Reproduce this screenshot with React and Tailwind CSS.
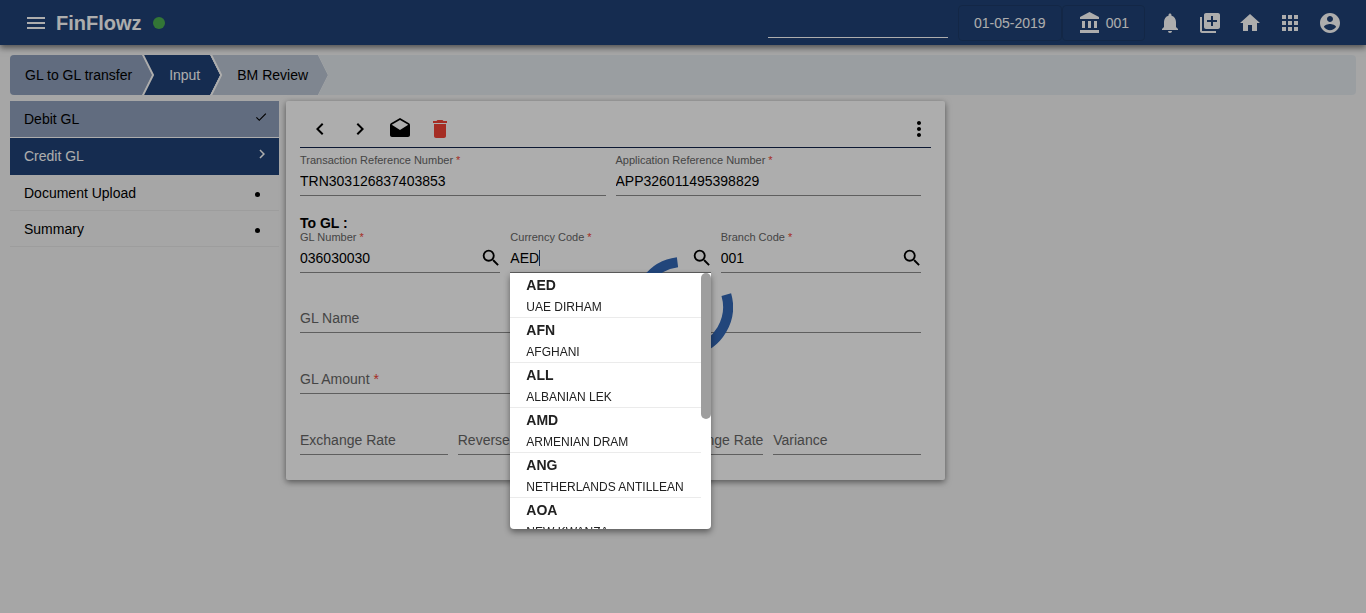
import React, { useState } from "react";
import {
  MdMenu,
  MdNotifications,
  MdHome,
  MdApps,
  MdChevronLeft,
  MdChevronRight,
  MdDrafts,
  MdDelete,
  MdMoreVert,
  MdSearch,
  MdCheck,
} from "react-icons/md";

const currencies = [
  ["AED", "UAE DIRHAM"],
  ["AFN", "AFGHANI"],
  ["ALL", "ALBANIAN LEK"],
  ["AMD", "ARMENIAN DRAM"],
  ["ANG", "NETHERLANDS ANTILLEAN"],
  ["AOA", "NEW KWANZA"],
];

function Glyph({ d }) {
  return (
    <svg viewBox="0 0 24 24" className="size-6" fill="currentColor" aria-hidden="true">
      <path d={d} />
    </svg>
  );
}

function BankIcon() {
  return (
    <Glyph d="M4 10v7h3v-7H4zm6 0v7h3v-7h-3zM2 22h19v-3H2v3zm14-12v7h3v-7h-3zm-4.500-9L2 6v2h19V6l-9.500-5z" />
  );
}

function LibraryAddIcon() {
  return (
    <Glyph d="M4 6H2v14c0 1.100.9 2 2 2h14v-2H4V6zm16-4H8c-1.100 0-2 .9-2 2v12c0 1.100.9 2 2 2h12c1.100 0 2-.9 2-2V4c0-1.100-.9-2-2-2zm-1 9h-4v4h-2v-4H9V9h4V5h2v4h4v2z" />
  );
}

function AccountIcon() {
  return (
    <Glyph d="M12 2C6.480 2 2 6.480 2 12s4.480 10 10 10 10-4.480 10-10S17.520 2 12 2zm0 3c1.660 0 3 1.340 3 3s-1.340 3-3 3-3-1.340-3-3 1.340-3 3-3zm0 14.200c-2.500 0-4.710-1.280-6-3.220.03-1.990 4-3.080 6-3.080 1.990 0 5.970 1.090 6 3.080-1.290 1.940-3.500 3.220-6 3.220z" />
  );
}

const headerActions = [
  ["Notifications", MdNotifications],
  ["Add to library", LibraryAddIcon],
  ["Home", MdHome],
  ["Apps", MdApps],
  ["Account", AccountIcon],
];

function Header() {
  return (
    <header className="flex h-[45px] items-center bg-[#204276] pl-6 pr-6 text-white shadow-[0_3px_6px_rgba(0,0,0,0.5)]">
      <button type="button" aria-label="Menu">
        <MdMenu className="size-6" />
      </button>
      <h1 className="ml-2 text-xl font-bold">FinFlowz</h1>
      <span className="ml-[11px] size-3 rounded-full bg-[#4caf50]" />
      <input
        aria-label="Search"
        className="ml-auto h-[30px] w-[180px] border-b border-white bg-transparent text-sm outline-none"
      />
      <div className="ml-[10px] flex text-sm">
        <span className="flex h-9 items-center rounded border border-[#1c3a68] px-[15px]">01-05-2019</span>
        <span className="flex h-9 items-center gap-1 rounded border border-[#1c3a68] px-[15px]">
          <BankIcon />
          001
        </span>
      </div>
      <nav className="ml-[13px] flex gap-4">
        {headerActions.map(([name, Icon]) => (
          <button key={name} type="button" aria-label={name}>
            <Icon className="size-6" />
          </button>
        ))}
      </nav>
    </header>
  );
}

function Steps() {
  return (
    <ol className="flex h-10 rounded bg-[#e4e9ee] text-sm">
      <li className="flex">
        <button
          type="button"
          className="rounded-l bg-[#90a0bc] pl-[15px] pr-5 [clip-path:polygon(0_0,calc(100%-10px)_0,100%_50%,calc(100%-10px)_100%,0_100%)]"
        >
          GL to GL transfer
        </button>
      </li>
      <li className="-ml-[10px] flex bg-white pl-[2px] [clip-path:polygon(0_0,calc(100%-10px)_0,100%_50%,calc(100%-10px)_100%,0_100%,10px_50%)]">
        <button
          type="button"
          className="bg-[#204276] pl-[25px] pr-5 text-white [clip-path:polygon(0_0,calc(100%-10px)_0,100%_50%,calc(100%-10px)_100%,0_100%,10px_50%)]"
        >
          Input
        </button>
      </li>
      <li className="-ml-[10px] flex bg-white pl-[2px] [clip-path:polygon(0_0,calc(100%-10px)_0,100%_50%,calc(100%-10px)_100%,0_100%,10px_50%)]">
        <button
          type="button"
          className="bg-[#bcc6d4] pl-[25px] pr-5 [clip-path:polygon(0_0,calc(100%-10px)_0,100%_50%,calc(100%-10px)_100%,0_100%,10px_50%)]"
        >
          BM Review
        </button>
      </li>
    </ol>
  );
}

function Sidebar() {
  return (
    <nav className="w-[269px] shrink-0 text-sm">
      <a href="#debit" className="flex h-[37px] items-center justify-between border-b border-white bg-[#90a0bc] pl-[14px] pr-[11px]">
        Debit GL
        <MdCheck className="mb-1 size-[14px]" />
      </a>
      <a href="#credit" className="flex h-[37px] items-center justify-between border-b border-[#204276] bg-[#204276] pl-[14px] pr-2 text-white">
        Credit GL
        <MdChevronRight className="mb-1 size-[18px]" />
      </a>
      <a href="#upload" className="flex h-9 items-center justify-between border-b border-[#e8e8e8] pl-[14px] pr-[19px]">
        Document Upload
        <span className="mt-1 size-[5px] rounded-full bg-black" />
      </a>
      <a href="#summary" className="flex h-9 items-center justify-between border-b border-[#e8e8e8] pl-[14px] pr-[19px]">
        Summary
        <span className="mt-1 size-[5px] rounded-full bg-black" />
      </a>
    </nav>
  );
}

function Field({ id, label, value = "", required, search, caret, children }) {
  const [text, setText] = useState(value);
  const star = required && <span className="text-[#f44336]"> *</span>;
  return (
    <div className="min-w-0 flex-1 pr-[10px]">
      <div className="relative border-b border-[#8c8c8c]">
        <label
          htmlFor={id}
          className={
            value
              ? "block text-[11px] leading-[14px] whitespace-nowrap text-[#666666]"
              : "block h-[14px] text-sm leading-[56px] whitespace-nowrap text-[#666666]"
          }
        >
          {label}
          {star}
        </label>
        <div className="flex h-7 items-center">
          <input
            id={id}
            value={text}
            onChange={(e) => setText(e.target.value)}
            className="w-full min-w-0 bg-transparent text-sm text-black outline-none"
          />
          {search && (
            <button type="button" aria-label={"Search " + label} className="-mr-[2px]">
              <MdSearch className="size-[22px]" />
            </button>
          )}
        </div>
        {caret && <span className="absolute bottom-[6px] left-[29px] h-4 w-px bg-[#204276]" />}
        {children}
      </div>
    </div>
  );
}

function CurrencyList() {
  return (
    <div className="absolute top-full left-0 z-30 mt-px h-64 w-full overflow-hidden rounded-b bg-white shadow-[0_3px_6px_rgba(0,0,0,0.45)]">
      <ul role="listbox" aria-label="Currencies" className="mr-[10px]">
        {currencies.map(([code, name]) => (
          <li key={code} role="option" aria-selected={code === "AED"} className="border-b border-[#ebebeb] pl-4 whitespace-nowrap text-[#212121]">
            <div className="text-sm leading-6 font-bold">{code}</div>
            <div className="text-xs leading-5">{name}</div>
          </li>
        ))}
      </ul>
      <span className="absolute top-0 right-0 h-[146px] w-[10px] rounded-full bg-[#9e9e9e]" />
    </div>
  );
}

function TransferForm() {
  return (
    <main className="w-[49%] max-w-[659px] rounded-xs bg-white px-[14px] pb-[25px] shadow-[0_2px_6px_rgba(0,0,0,0.5)]">
      <div className="flex h-[47px] items-center gap-4 border-b border-[#12244c] pt-[10px] pl-2">
        <button type="button" aria-label="Previous">
          <MdChevronLeft className="size-6" />
        </button>
        <button type="button" aria-label="Next">
          <MdChevronRight className="size-6" />
        </button>
        <button type="button" aria-label="Open message">
          <MdDrafts className="size-6" />
        </button>
        <button type="button" aria-label="Delete" className="text-[#f44336]">
          <MdDelete className="size-6" />
        </button>
        <button type="button" aria-label="More" className="ml-auto">
          <MdMoreVert className="size-6" />
        </button>
      </div>
      <div className="mt-[5px] flex">
        <Field id="trn" label="Transaction Reference Number" value="TRN303126837403853" required />
        <Field id="app" label="Application Reference Number" value="APP326011495398829" required />
      </div>
      <h2 className="pt-5 text-sm leading-[14px] font-bold">To GL :</h2>
      <div className="flex">
        <Field id="gl" label="GL Number" value="036030030" required search />
        <Field id="currency" label="Currency Code" value="AED" required search caret>
          <CurrencyList />
        </Field>
        <Field id="branch" label="Branch Code" value="001" required search />
      </div>
      <div className="mt-[17px] flex">
        <Field id="name" label="GL Name" />
      </div>
      <div className="mt-[18px] flex">
        <div className="flex w-1/2">
          <Field id="amount" label="GL Amount" required />
        </div>
      </div>
      <div className="mt-[18px] flex">
        <Field id="rate" label="Exchange Rate" />
        <Field id="reverse" label="Reverse Rate" />
        <Field id="orig" label="Original Exchange Rate" />
        <Field id="variance" label="Variance" />
      </div>
    </main>
  );
}

function Spinner() {
  return (
    <div className="pointer-events-none fixed inset-0 z-20 flex items-center justify-center">
      <svg viewBox="0 0 100 100" className="size-[100px]" fill="none" aria-hidden="true">
        <path d="M93.300 37.600A45 45 0 1 1 44.500 5.300" stroke="#22467b" strokeWidth="10" />
      </svg>
    </div>
  );
}

export default function App() {
  return (
    <div className="min-h-screen bg-[#f5f5f5] font-['Liberation_Sans',Arial,sans-serif] text-black">
      <Header />
      <div className="px-[10px] pt-[10px]">
        <Steps />
        <div className="mt-[6px] flex items-start gap-[7px]">
          <Sidebar />
          <TransferForm />
        </div>
      </div>
      <div className="pointer-events-none fixed inset-0 z-10 bg-black/32" />
      <Spinner />
    </div>
  );
}
